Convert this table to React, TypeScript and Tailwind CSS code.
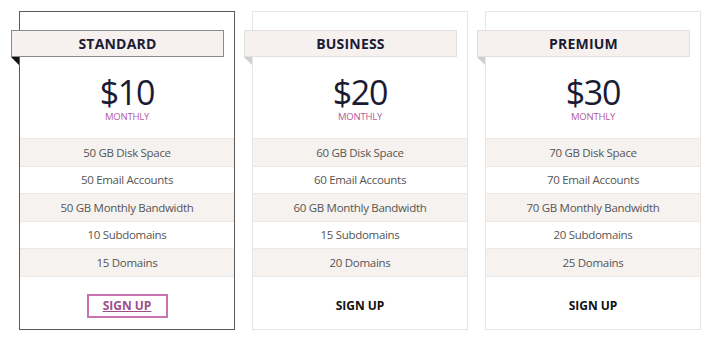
const plans = [
  {
    name: "STANDARD",
    price: "$10",
    features: ["50 GB Disk Space", "50 Email Accounts", "50 GB Monthly Bandwidth", "10 Subdomains", "15 Domains"],
    active: true,
  },
  {
    name: "BUSINESS",
    price: "$20",
    features: ["60 GB Disk Space", "60 Email Accounts", "60 GB Monthly Bandwidth", "15 Subdomains", "20 Domains"],
    active: false,
  },
  {
    name: "PREMIUM",
    price: "$30",
    features: ["70 GB Disk Space", "70 Email Accounts", "70 GB Monthly Bandwidth", "20 Subdomains", "25 Domains"],
    active: false,
  },
]

function PlanCard({ plan }: { plan: (typeof plans)[number] }) {
  return (
    <div
      className={`relative flex flex-col w-[216px] h-[319px] bg-white border ${
        plan.active ? "border-[#5a5a5a]" : "border-[#e6e6e6]"
      }`}
    >
      <div className="relative mt-[18px] -ml-[9px] w-[213px]">
        <div
          className={`h-[27px] flex items-center justify-center bg-[#f6f1ef] border ${
            plan.active ? "border-[#8a8a8a]" : "border-[#e4e0de]"
          }`}
        >
          <span className="text-[14px] font-bold text-[#1b1b35] tracking-[0.2px]">{plan.name}</span>
        </div>
        <svg className="absolute left-0 top-[27px]" width="8" height="8" viewBox="0 0 8 8">
          <polygon points="0,0 8,0 8,8" fill={plan.active ? "#111" : "#cfcfcf"} />
        </svg>
      </div>
      <div className="h-[81px] flex flex-col items-center pt-[19px]">
        <div className="text-[34px] leading-[33px] tracking-[-1.2px] text-[#1b1b35]">{plan.price}</div>
        <div className="text-[9.5px] leading-[10px] mt-[3px] tracking-[-0.2px] text-[#b35a9c]">MONTHLY</div>
      </div>
      <div className="flex flex-col border-t border-[#ece8e6]">
        {plan.features.map((f, i) => (
          <div
            key={f}
            className={`h-[27.5px] flex items-center justify-center text-[11.5px] tracking-[-0.3px] text-[#555] border-b border-[#ece8e6] ${
              i % 2 === 0 ? "bg-[#f6f2f0]" : "bg-white"
            }`}
          >
            {f}
          </div>
        ))}
      </div>
      <div className="flex-1 flex items-center justify-center pt-[6px]">
        {plan.active ? (
          <a className="w-[81px] h-[24px] flex items-center justify-center border-2 border-[#c872b1] text-[12px] font-bold text-[#a14d8b] underline">
            SIGN UP
          </a>
        ) : (
          <span className="text-[12px] font-bold text-[#111]">SIGN UP</span>
        )}
      </div>
    </div>
  )
}

export default function App() {
  return (
    <div
      className="w-[720px] h-[342px] bg-white flex gap-[17px] pl-[19px] pt-[11px]"
      style={{ fontFamily: '"Open Sans", "Noto Sans", sans-serif' }}
    >
      {plans.map((p) => (
        <PlanCard key={p.name} plan={p} />
      ))}
    </div>
  )
}
